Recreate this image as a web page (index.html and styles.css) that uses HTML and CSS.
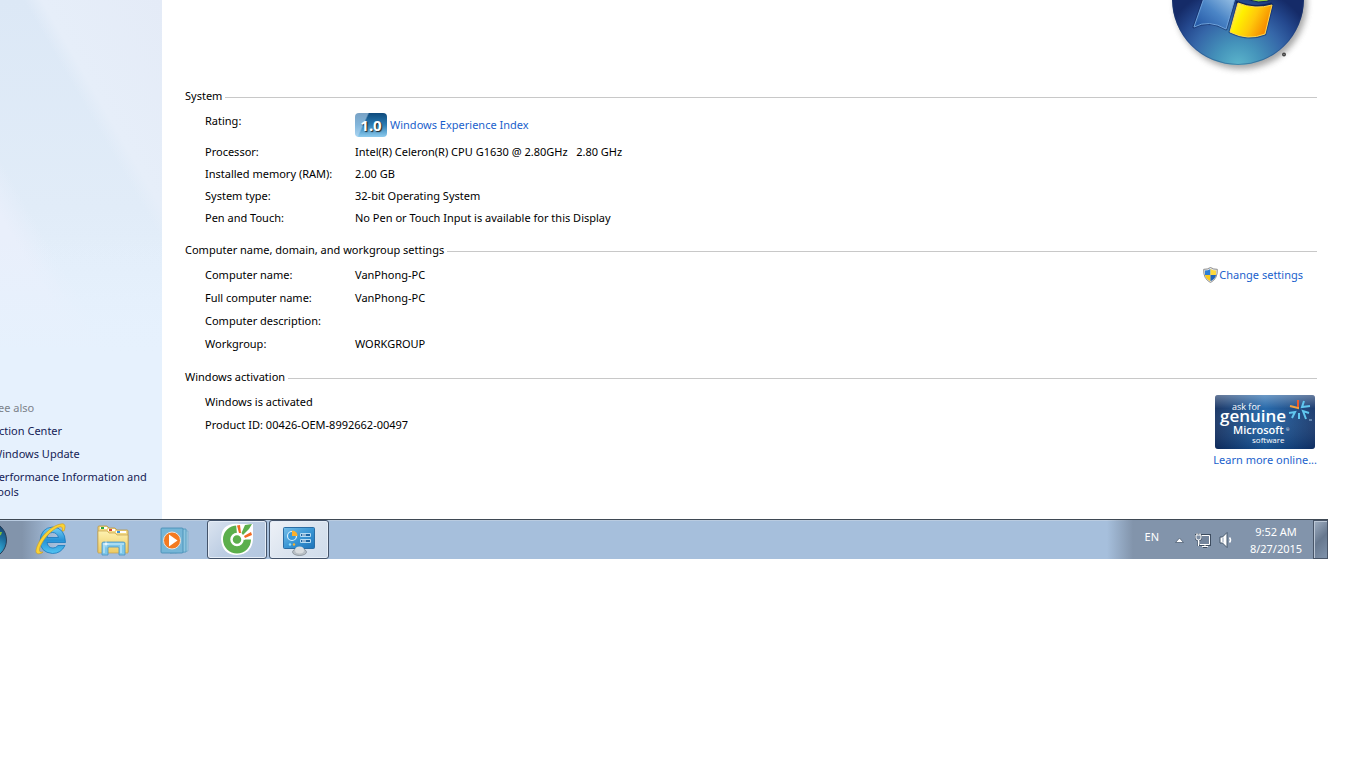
FILE: index.html
```html
<!DOCTYPE html>
<html lang="en">
<head>
<meta charset="utf-8">
<title>System</title>
<link rel="stylesheet" href="styles.css">
</head>
<body>
<div class="desktop">
  <div class="window">
    <aside class="sidebar">
      <nav class="see-also" aria-labelledby="see-also-title">
        <h2 class="see-also-title" id="see-also-title">See also</h2>
        <a href="#">Action Center</a>
        <a href="#">Windows Update</a>
        <a href="#">Performance Information and Tools</a>
      </nav>
    </aside>
    <main class="content">
      <header class="banner">
        <svg class="logo" width="151" height="80" viewBox="0 0 151 80" role="img" aria-label="Windows logo">
          <defs>
            <radialGradient id="orb" gradientUnits="userSpaceOnUse" cx="72" cy="66" r="80">
              <stop offset="0" stop-color="#5cb6cc"/><stop offset=".28" stop-color="#4594bb"/><stop offset=".6" stop-color="#3566a8"/><stop offset=".8" stop-color="#24488e"/><stop offset="1" stop-color="#152b68"/>
            </radialGradient>
            <linearGradient id="pane-blue" x1="0" y1="1" x2="1" y2="0"><stop offset="0" stop-color="#1d50a0"/><stop offset=".5" stop-color="#4b85c6"/><stop offset="1" stop-color="#a5cbea"/></linearGradient>
            <linearGradient id="pane-yellow" x1="0" y1="0" x2="1" y2=".4"><stop offset="0" stop-color="#ffe9a0"/><stop offset=".35" stop-color="#fff000"/><stop offset=".65" stop-color="#ffc80a"/><stop offset="1" stop-color="#f58a00"/></linearGradient>
            <filter id="soft" x="-20%" y="-20%" width="140%" height="140%"><feGaussianBlur stdDeviation="3"/></filter>
          </defs>
          <circle cx="75" cy="3" r="66" fill="#777" opacity=".65" filter="url(#soft)"/>
          <circle cx="72" cy="-1" r="66" fill="url(#orb)"/>
          <circle cx="72" cy="-1" r="65.500" fill="none" stroke="#1c3e76" stroke-opacity=".4"/>
          <path d="M39-5 28 27Q43 19 60 29L70-5Z" fill="url(#pane-blue)" stroke="#10265d" stroke-opacity=".5" stroke-width="3" stroke-linejoin="round"/>
          <path d="M39-5 28 27Q43 19 60 29L70-5Z" fill="url(#pane-blue)" stroke="#6fa3db" stroke-width="1"/>
          <path d="M72 3Q89 10 106 5L99 34Q82 41 64 32Z" fill="url(#pane-yellow)" stroke="#10265d" stroke-opacity=".5" stroke-width="3" stroke-linejoin="round"/>
          <path d="M70 2Q89 10 106 4" fill="none" stroke="#10265d" stroke-width="3"/>
          <path d="M72 3Q89 10 106 5L99 34Q82 41 64 32Z" fill="url(#pane-yellow)" stroke="#ffd84b" stroke-width="1"/>
          <path d="M77-4Q91 7 110-2V-10H77Z" fill="#8ecf3d" stroke="#10265d" stroke-width="1"/>
          <circle cx="118" cy="54.500" r="2" fill="#444"/><circle cx="118" cy="54.500" r=".5" fill="#bbb"/>
        </svg>
      </header>

      <section class="group">
        <h2 class="group-title">System</h2>
        <table class="facts">
          <tr class="rating">
            <th scope="row">Rating:</th>
            <td><div class="score-row"><span class="score">1.0</span><a href="#">Windows Experience Index</a></div></td>
          </tr>
          <tr><th scope="row">Processor:</th><td>Intel(R) Celeron(R) CPU G1630 @ 2.80GHz&nbsp;&nbsp; 2.80 GHz</td></tr>
          <tr><th scope="row">Installed memory (RAM):</th><td>2.00 GB</td></tr>
          <tr><th scope="row">System type:</th><td>32-bit Operating System</td></tr>
          <tr><th scope="row">Pen and Touch:</th><td>No Pen or Touch Input is available for this Display</td></tr>
        </table>
      </section>

      <section class="group">
        <h2 class="group-title">Computer name, domain, and workgroup settings</h2>
        <div class="split">
          <table class="facts roomy">
            <tr><th scope="row">Computer name:</th><td>VanPhong-PC</td></tr>
            <tr><th scope="row">Full computer name:</th><td>VanPhong-PC</td></tr>
            <tr><th scope="row">Computer description:</th><td></td></tr>
            <tr><th scope="row">Workgroup:</th><td>WORKGROUP</td></tr>
          </table>
          <a class="change" href="#">
            <svg width="15" height="16" viewBox="0 0 15 16" aria-hidden="true">
              <path d="M7.500.5Q10.500 2.500 14.300 2.300 15 11.500 7.500 15.600 0 11.500.7 2.300 4.500 2.500 7.500.5Z" fill="#e6e6e6" stroke="#777" stroke-width=".8"/>
              <path d="M7.500 2Q4.800 3.600 2 3.500V8H7.500Z" fill="#2f7fd6"/><path d="M7.500 2Q10.200 3.600 13 3.500V8H7.500Z" fill="#ffd93b"/>
              <path d="M2 8Q2.800 12 7.500 14.300V8Z" fill="#fccb1c"/><path d="M13 8Q12.200 12 7.500 14.300V8Z" fill="#1f63ba"/>
            </svg>Change settings</a>
        </div>
      </section>

      <section class="group">
        <h2 class="group-title">Windows activation</h2>
        <div class="split">
          <div class="lines">
            <p>Windows is activated</p>
            <p>Product ID: 00426-OEM-8992662-00497</p>
          </div>
          <div class="genuine">
            <svg width="100" height="54" viewBox="0 0 100 54" role="img" aria-label="Ask for genuine Microsoft software">
              <defs>
                <linearGradient id="gen" x1="0" y1="0" x2="1" y2="0"><stop offset="0" stop-color="#122f60"/><stop offset=".5" stop-color="#1d63a8"/><stop offset="1" stop-color="#123369"/></linearGradient>
                <linearGradient id="gloss" x1="0" y1="0" x2="0" y2="1"><stop offset="0" stop-color="#fff" stop-opacity=".35"/><stop offset=".25" stop-color="#fff" stop-opacity=".05"/><stop offset="1" stop-color="#001a48" stop-opacity=".25"/></linearGradient>
              </defs>
              <rect width="100" height="54" rx="3" fill="url(#gen)"/>
              <rect width="100" height="54" rx="3" fill="url(#gloss)"/>
              <g class="badge-text">
                <text x="17" y="15" font-size="9">ask for</text>
                <text x="5" y="27" font-size="17" font-weight="600">genuine</text>
                <text x="18" y="39" font-size="11" font-weight="600">Microsoft</text>
                <text x="71" y="36" font-size="4">®</text>
                <text x="37" y="48" font-size="8">software</text>
              </g>
              <g fill="none" stroke-width="2">
                <path d="M83 5V13L75 11" stroke="#f5a13c"/><path d="M83 5V12" stroke="#ef5b2a"/>
                <path d="M89 6 87 12 95 11M94 18 88 16 91 24M77 23 80 17 74 18M84 24V18" stroke="#61c6ee"/>
              </g>
              <path d="M94 25H97" stroke="#9fc3e2"/>
            </svg>
            <a href="#">Learn more online...</a>
          </div>
        </div>
      </section>
    </main>
  </div>

  <footer class="taskbar">
    <button class="start" type="button" aria-label="Start">
      <svg width="7" height="39" viewBox="0 0 7 39" aria-hidden="true">
        <defs><radialGradient id="start-orb" gradientUnits="userSpaceOnUse" cx="-4" cy="30" r="26"><stop offset="0" stop-color="#35b5e0"/><stop offset=".5" stop-color="#1c6d9d"/><stop offset="1" stop-color="#173e64"/></radialGradient></defs>
        <circle cx="-12" cy="20" r="18.500" fill="url(#start-orb)" stroke="#273d57"/>
        <path d="M-4 12 2 12 1 15Q-2 16-5 15Z" fill="#80bd3c"/>
      </svg>
    </button>
    <div class="tasks">
      <button class="task" type="button" aria-label="Internet Explorer">
        <svg width="34" height="34" viewBox="0 0 34 34" aria-hidden="true">
          <defs><linearGradient id="ie" x1="0" y1="0" x2="0" y2="1"><stop offset="0" stop-color="#78d1f6"/><stop offset=".5" stop-color="#2792d6"/><stop offset="1" stop-color="#52c4f2"/></linearGradient></defs>
          <path d="M31.500 19.500H13Q14 25 19 25 22 25 24 22.500H31Q27 30.500 18.500 30.500 6 29.500 6 17.500 7 5 18.500 4 31 4.500 31.500 19.500ZM13 14.500H24.500Q23 9.500 18.500 9.500 14 9.500 13 14.500Z" fill="url(#ie)" stroke="#1878bd" stroke-width=".8" fill-rule="evenodd"/>
          <path d="M9 29C5 30 4 27 8 20 13 11 21 5 25 4 28 3 29 5 28 8L30 8C32 3 31 0 27 1 19 2 9 11 5 19 1 27 0 33 8 30Z" fill="#fbd335" stroke="#cd9818" stroke-width=".6"/>
        </svg>
      </button>
      <button class="task" type="button" aria-label="Windows Explorer">
        <svg width="34" height="34" viewBox="0 0 34 34" aria-hidden="true">
          <defs><linearGradient id="folder" x1="0" y1="0" x2="0" y2="1"><stop offset="0" stop-color="#fdf1b0"/><stop offset="1" stop-color="#eecb63"/></linearGradient></defs>
          <path d="M2 29V4Q2 3 3 3H11L13 5H19L21 7H31Q32 7 32 8V29Z" fill="#f2d985" stroke="#b99543" stroke-width=".8"/>
          <path d="M4 4H11V6H4Z" fill="#fff"/><path d="M5 4H8V6H5Z" fill="#28a53b"/>
          <path d="M12 6H19V8H12Z" fill="#fff"/><path d="M13 6H16V8H13Z" fill="#d84532"/>
          <path d="M20 8H30V10H20Z" fill="#fff"/><path d="M21 8H24V10H21Z" fill="#3c91d8"/>
          <path d="M2 8H11L13 10H19L21 12H32V30H2Z" fill="url(#folder)" stroke="#c5a14c" stroke-width=".7"/>
          <path d="M6 32V20Q6 19 8 19H27Q29 19 29 20V32H23V25Q23 24 22 24H13Q12 24 12 25V32Z" fill="#7dc7e9" stroke="#4993c2" stroke-width=".8"/>
          <path d="M7 21H28M8 22V30M25 22V30" stroke="#d5f1fc" fill="none"/>
          <path d="M10 17 10.500 20.500 14 21 10.500 21.500 10 25 9.500 21.500 6 21 9.500 20.500Z" fill="#fff"/>
        </svg>
      </button>
      <button class="task" type="button" aria-label="Windows Media Player">
        <svg width="34" height="34" viewBox="0 0 34 34" aria-hidden="true">
          <path d="M17 7 30 8V28L17 30Z" fill="#a4cbe2" stroke="#76acca" stroke-width=".7"/>
          <path d="M12 6 28 6V29L12 30Z" fill="#8cc5e0" stroke="#4a95bb" stroke-width=".8"/>
          <path d="M4 5H24Q25 5 25 6V29Q25 30 24 30H4Q3 30 3 29V6Q3 5 4 5Z" fill="#76b6d7" stroke="#438cb2" stroke-width=".8"/>
          <circle cx="14" cy="17.500" r="8.500" fill="#f47a20" stroke="#e9e4df"/>
          <path d="M11 11.500 19.500 17.500 11 23.500Z" fill="#fff"/>
        </svg>
      </button>
      <button class="task open" type="button" aria-label="Cốc Cốc">
        <svg width="34" height="36" viewBox="0 0 34 36" aria-hidden="true">
          <path d="M20 2Q1 0 1 17 2 33 17 33 32 32 33 17L33 3Z" fill="#fff"/>
          <path d="M17 3.500A14 14 0 1 0 31 17.500L24 17.500 17 10Z" fill="#5caf4c"/>
          <path d="M17 12 16 2H33V12L24 18Z" fill="#fff"/>
          <circle cx="17" cy="17.500" r="5.500" fill="#5caf4c" stroke="#fff" stroke-width="2.500"/>
          <path d="M17 3.500 20 3 21 11 19 11Z" fill="#f26a21"/><path d="M24 14 31 10 32 13 25 16Z" fill="#f26a21"/>
          <path d="M21.500 11 25 3 32 2 29 7 23 13Z" fill="#5caf4c"/>
        </svg>
      </button>
      <button class="task open" type="button" aria-label="Control Panel">
        <svg width="34" height="34" viewBox="0 0 34 34" aria-hidden="true">
          <defs><linearGradient id="panel" x1="0" y1="0" x2="1" y2="1"><stop offset="0" stop-color="#77bfe9"/><stop offset=".5" stop-color="#3b97d5"/><stop offset="1" stop-color="#1d73b9"/></linearGradient></defs>
          <rect x="1.500" y="4.500" width="31" height="21" rx="1" fill="url(#panel)" stroke="#2a6da5"/>
          <circle cx="10" cy="13" r="4.500" fill="#3a9bdc" stroke="#d9effb" stroke-width="1.200"/>
          <path d="M10 13V7.500Q15.500 8 15.500 13Z" fill="#fbb02d"/>
          <path d="M18.500 10.500H28.500V13.500H18.500ZM18.500 16.500H28.500V19.500H18.500Z" fill="#1d65a3" stroke="#b4dcf5"/>
          <path d="M20 12H24M20 18H24" stroke="#fff"/>
          <circle cx="8" cy="21.500" r="1.200" fill="#8ee0ff"/><circle cx="12" cy="21.500" r="1.200" fill="#fbb02d"/>
          <ellipse cx="17.500" cy="29" rx="7" ry="3.500" fill="#b9c0c6" stroke="#7b858e" stroke-width=".7"/>
          <ellipse cx="17.500" cy="27" rx="4.500" ry="3.500" fill="#d9dde0"/>
        </svg>
      </button>
    </div>
    <div class="tray">
      <span class="lang">EN</span>
      <button class="tray-button" type="button" aria-label="Show hidden icons">
        <svg width="9" height="16" viewBox="0 0 9 16" aria-hidden="true"><path d="M.5 10.500 4.500 6 8.500 10.500Z" fill="#fff" stroke="#4f5f73" stroke-width=".8"/></svg>
      </button>
      <button class="tray-button" type="button" aria-label="Network">
        <svg width="16" height="16" viewBox="0 0 16 16" aria-hidden="true">
          <path d="M4.500 3.500H14.500V12.500H4.500ZM8 15H12M10 13V15" fill="#6d7f96" stroke="#3d4c5f" stroke-width="3"/>
          <path d="M4.500 3.500H14.500V12.500H4.500Z" fill="#73849b" stroke="#fff"/><path d="M7 14.500H13M10 13V15" stroke="#fff"/>
          <path d="M1 3H6V6Q6 8 3.500 8 1 8 1 6ZM2 1V3M5 1V3M3.500 8V14" fill="#fff" stroke="#3d4c5f" stroke-width="2"/>
          <path d="M1 3H6V6Q6 8 3.500 8 1 8 1 6ZM2 1V3M5 1V3M3.500 8V14" fill="#7c8da3" stroke="#fff"/>
        </svg>
      </button>
      <button class="tray-button" type="button" aria-label="Volume">
        <svg width="16" height="16" viewBox="0 0 16 16" aria-hidden="true">
          <path d="M1 5H3.500L8 .5V15.500L3.500 11H1Z" fill="#fff" stroke="#45566b"/><path d="M4 5.500V10.500" stroke="#8b9bb0"/>
          <path d="M10.500 5.500Q12.500 8 10.500 10.500" fill="none" stroke="#fff" stroke-width="1.500"/>
        </svg>
      </button>
      <div class="clock"><span>9:52 AM</span><span>8/27/2015</span></div>
      <button class="show-desktop" type="button" aria-label="Show desktop"></button>
    </div>
  </footer>
</div>
</body>
</html>
```
FILE: styles.css
```css
* {
  box-sizing: border-box;
}

body {
  margin: 0;
  background: #fff;
  color: #000;
  font-family: "Noto Sans", "Open Sans", sans-serif;
  font-size: 11px;
  line-height: 16px;
}

h2,
p {
  margin: 0;
  font-size: inherit;
  font-weight: normal;
}

a {
  color: #1a5fcc;
  text-decoration: none;
}

button {
  margin: 0;
  padding: 0;
  border: 0;
  background: none;
}

svg {
  display: block;
  flex: none;
}

.desktop {
  margin-right: 38px;
}

.window {
  display: grid;
  grid-template-columns: 162px 1fr;
}

.sidebar {
  display: flex;
  flex-direction: column;
  justify-content: flex-end;
  overflow: hidden;
  padding-bottom: 20px;
  background:
    linear-gradient(rgba(230, 241, 253, 0) 45%, #e6f1fd 68%),
    linear-gradient(60deg, rgba(230, 238, 249, 0) 70%, #e6eef9 74%, #e4ebf7),
    linear-gradient(60deg, #e9effb 38%, rgba(233, 239, 251, 0) 45%),
    linear-gradient(#dce8f6, #e1ecf8 40%, #e6f1fd 70%);
}

.see-also {
  display: flex;
  flex-direction: column;
  gap: 7px;
  margin-left: -8px;
}

.see-also a {
  color: #151c55;
  line-height: 15px;
}

.see-also a + a {
  margin-top: 1px;
}

.see-also-title {
  color: #7c828a;
}

.content {
  padding: 0 11px 51px 23px;
}

.banner {
  display: flex;
  justify-content: flex-end;
  height: 88px;
}

.group + .group {
  margin-top: 13px;
}

.group-title {
  display: flex;
  align-items: center;
  gap: 3px;
  margin-bottom: 6px;
}

.group-title::after {
  content: "";
  flex: 1;
  height: 1px;
  margin-top: 3px;
  background: #c8c8c8;
}

.facts {
  border-collapse: collapse;
  margin-left: 20px;
}

.facts th,
.facts td {
  height: 22px;
  padding: 0;
  font-weight: normal;
  text-align: left;
}

.facts th {
  width: 150px;
}

.facts.roomy th,
.facts.roomy td {
  height: 23px;
  padding-bottom: 1px;
}

.facts .rating th,
.facts .rating td {
  height: 31px;
  padding-top: 3px;
  vertical-align: top;
}

.score-row {
  display: flex;
  align-items: center;
  gap: 3px;
}

.score {
  width: 32px;
  height: 24px;
  border-radius: 4px;
  background: linear-gradient(115deg, rgba(190, 220, 245, .6) 30%, rgba(255, 255, 255, 0) 34%), linear-gradient(#0f4a7c, #2a7db4 50%, #8ecbee);
  color: #fff;
  font-size: 15px;
  font-weight: bold;
  line-height: 24px;
  text-align: center;
  text-shadow: 1px 1px 1px #222;
}

.split {
  display: flex;
  justify-content: space-between;
  align-items: flex-start;
}

.change {
  display: flex;
  align-items: center;
  gap: 1px;
  margin: 3px 14px 0 0;
}

.lines {
  margin-left: 20px;
  line-height: 22px;
}

.lines p + p {
  margin-top: 1px;
}

.genuine {
  display: flex;
  flex-direction: column;
  align-items: center;
  gap: 3px;
  padding-top: 4px;
}

.badge-text {
  fill: #fff;
  font-family: "Open Sans", sans-serif;
}

.taskbar {
  display: flex;
  height: 40px;
  border-top: 1px solid #3f4954;
  background: linear-gradient(90deg, #8294ab 0, #8294ab 22px, #a6bfdc 56px);
  box-shadow: inset 0 1px #b9cbe0;
}

.start {
  width: 7px;
  overflow: hidden;
}

.tasks {
  display: flex;
  flex: 1;
  gap: 2px;
  padding-left: 14px;
}

.task {
  display: flex;
  align-items: center;
  justify-content: center;
  width: 60px;
  height: 39px;
}

.task.open {
  border: 1px solid #43536a;
  border-radius: 3px;
  background: linear-gradient(135deg, #dbe4f0, #bccde3 50%, #b3c7e0);
  box-shadow: inset 0 0 0 1px #e5edf7;
}

.task.open:last-child {
  background: linear-gradient(135deg, #edf1f7, #dbe4ef 50%, #cfdceb);
}

.tray {
  display: flex;
  align-items: center;
  padding-left: 38px;
  background: linear-gradient(90deg, rgba(130, 148, 171, 0), #8294ab 26px);
  color: #fff;
}

.lang {
  padding-bottom: 5px;
}

.tray-button {
  display: flex;
  justify-content: center;
  width: 24px;
}

.lang + .tray-button {
  margin-left: 8px;
}

.clock {
  display: flex;
  flex-direction: column;
  align-items: center;
  width: 74px;
  line-height: 17px;
}

.show-desktop {
  align-self: stretch;
  width: 15px;
  border: 1px solid #485568;
  background: linear-gradient(135deg, #a0afc2, #67788f 50%, #8093ab);
  box-shadow: inset 1px 1px #bac6d5;
}
```
